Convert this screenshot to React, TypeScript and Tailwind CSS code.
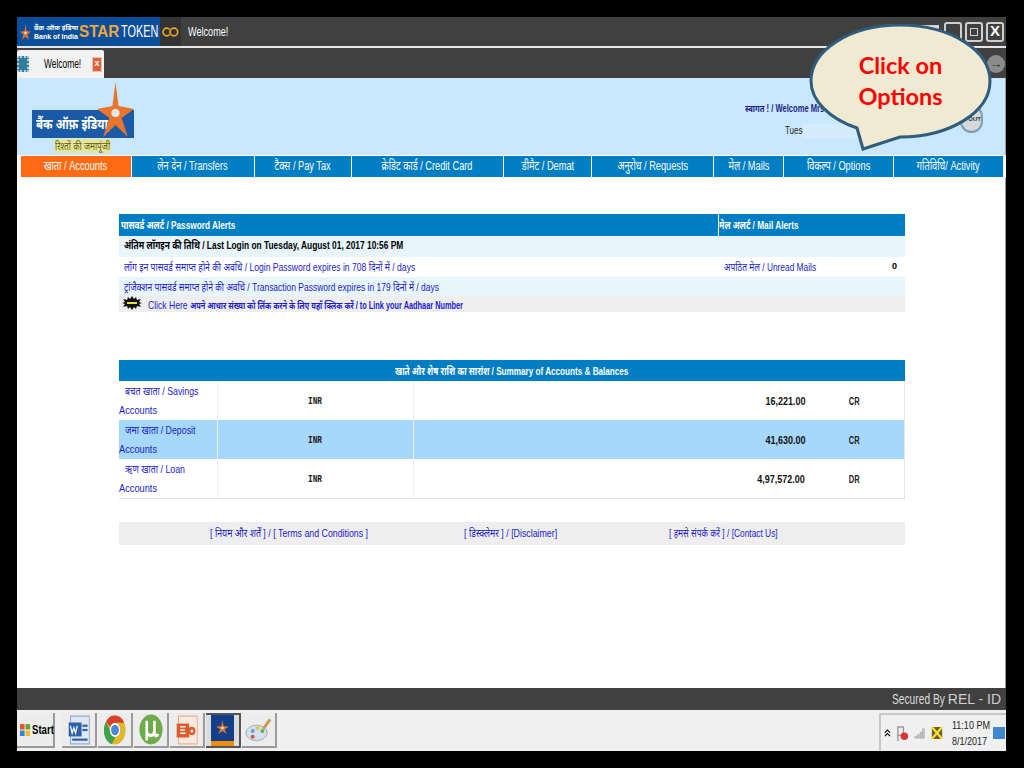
import React from "react";

const sans = { fontFamily: '"Liberation Sans", "Noto Sans Devanagari", "Noto Sans", sans-serif' };

const navItems = [
  { label: "खाता / Accounts", w: "w-[110px]", active: true },
  { label: "लेन देन / Transfers", w: "w-[122px]" },
  { label: "टैक्स / Pay Tax", w: "w-[96px]" },
  { label: "क्रेडिट कार्ड / Credit Card", w: "w-[151px]" },
  { label: "डीमैट / Demat", w: "w-[87px]" },
  { label: "अनुरोध / Requests", w: "w-[121px]" },
  { label: "मेल / Mails", w: "w-[69px]" },
  { label: "विकल्प / Options", w: "w-[109px]" },
  { label: "गतिविधि/ Activity", w: "w-[109px]" },
];

const accounts = [
  { hi: "बचत खाता / Savings", amount: "16,221.00", type: "CR", bg: "bg-white" },
  { hi: "जमा खाता / Deposit", amount: "41,630.00", type: "CR", bg: "bg-[#a5d8fb]" },
  { hi: "ऋण खाता / Loan", amount: "4,97,572.00", type: "DR", bg: "bg-white" },
];

const Star = ({ className }: { className: string }) => (
  <svg viewBox="0 0 36 55" preserveAspectRatio="none" className={className}>
    <polygon
      points="18,0 21,24 36,27 24,36 30,55 18,43 6,55 12,36 0,27 15,24"
      fill="#e8752a"
    />
    <circle cx="18" cy="31" r="4" fill="#dfe7ea" />
  </svg>
);

const TaskButton = ({ children, active }: { children: React.ReactNode; active?: boolean }) => (
  <div
    className={`w-[35px] h-[35px] shrink-0 flex items-center justify-center border-b-2 border-r-2 overflow-hidden ${
      active ? "border-[#555] border-t-2 border-t-[#555] bg-[#dcdcdc]" : "border-[#9a9a9a] bg-[#ececec]"
    }`}
  >
    {children}
  </div>
);

export default function App() {
  return (
    <div className="relative w-[1024px] h-[768px] bg-black pt-[17px] pb-[17px] pl-[17px] pr-[18px] overflow-hidden">
      <div className="w-full h-full flex flex-col bg-white" style={sans}>
        {/* title bar */}
        <div className="h-[29px] flex items-center bg-[#404040] shrink-0">
          <div className="w-[143px] h-full shrink-0 bg-[#0b4f9c] flex items-center pl-[3px] overflow-hidden">
            <Star className="w-[11px] h-[16px] shrink-0" />
            <div className="ml-[3px] text-white text-[7px] leading-[9px] font-bold w-[45px] shrink-0 whitespace-nowrap">
              <div>बैंक ऑफ़ इंडिया</div>
              <div>Bank of India</div>
            </div>
            <span className="text-[16px] font-bold text-[#f0a93a] inline-block whitespace-nowrap origin-left scale-x-[0.95] w-[42px] shrink-0">STAR</span>
            <span className="text-[16px] text-white inline-block whitespace-nowrap origin-left scale-x-[0.68]">TOKEN</span>
          </div>
          <div className="w-[21px] h-full shrink-0 bg-[#333] flex items-center justify-center">
            <svg viewBox="0 0 20 12" className="w-[17px] h-[12px]">
              <path d="M9 3A4.5 4.5 0 1 0 9 9" fill="none" stroke="#e8a62a" strokeWidth="2" />
              <circle cx="14" cy="6" r="4.5" fill="none" stroke="#e8a62a" strokeWidth="2" />
            </svg>
          </div>
          <span className="ml-[7px] text-white text-[12px] inline-block whitespace-nowrap origin-left scale-x-[0.76]">Welcome!</span>
          <div className="ml-auto flex gap-[3px] pr-[2px] items-center">
            <div className="w-[20px] h-[14px] bg-[#cfd8dc] mr-[2px]" />
            <div className="w-[18px] h-[20px] border-2 border-[#cfcfcf] rounded-[3px]" />
            <div className="w-[18px] h-[20px] border-2 border-[#cfcfcf] rounded-[3px] flex items-center justify-center">
              <div className="w-[8px] h-[8px] border border-[#cfcfcf]" />
            </div>
            <div className="w-[18px] h-[20px] border-2 border-[#cfcfcf] rounded-[3px] flex items-center justify-center text-white font-bold text-[15px]">
              X
            </div>
          </div>
        </div>
        <div className="h-[2px] bg-[#e6e6e6] shrink-0" />
        {/* tab bar */}
        <div className="h-[30px] flex bg-[#404040] shrink-0 items-end">
          <div className="w-[87px] h-[28px] bg-[#f2f2f2] rounded-t-[2px] flex items-center">
            <div className="w-[12px] h-[16px] shrink-0 bg-[#2f7f9f] border-2 border-dotted border-[#bcd]" />
            <span className="ml-[15px] w-[48px] shrink-0 text-[12px] text-black inline-block whitespace-nowrap origin-left scale-x-[0.7]">Welcome!</span>
            <div className="ml-auto mr-[2px] w-[11px] h-[15px] bg-[#e2603a] border border-[#e9c4b4] text-white text-[9px] font-bold flex items-center justify-center rounded-[1px]">
              x
            </div>
          </div>
          <div className="ml-auto mr-[1px] mb-[5px] w-[18px] h-[18px] rounded-full bg-[#8c8c8c] text-[#333] text-[13px] leading-[17px] text-center font-bold">
            →
          </div>
        </div>
        {/* page header */}
        <div className="h-[77px] bg-[#c9e8fd] shrink-0 flex relative border-r border-[#9a9a9a]">
          <div className="ml-[15px] w-[104px] flex flex-col relative">
            <div className="mt-[32px] h-[28px] bg-[#1b5aa6] w-[102px] flex items-center pl-[4px] text-white text-[15px] font-bold">
              <span className="inline-block whitespace-nowrap origin-left scale-x-[0.76]">बैंक ऑफ़ इंडिया</span>
            </div>
            <div className="mt-[1px] ml-[23px] w-[56px] h-[14px] text-[11px] leading-[14px] text-[#6a5a10] bg-[#e4e79a] overflow-hidden">
              <span className="inline-block whitespace-nowrap origin-left scale-x-[0.75]">रिश्तों की जमापूंजी</span>
            </div>
            <Star className="absolute left-[65px] top-[4px] w-[37px] h-[55px]" />
          </div>
          <div className="ml-auto w-[260px] pt-[23px] text-[10px] font-bold text-[#1c1c8c]">
            <div className="inline-block whitespace-nowrap origin-left scale-x-[0.76]">स्वागत ! / Welcome Mrs</div>
            <div className="mt-[7px] ml-[40px] flex items-center font-normal text-[#222]">
              <span className="inline-block w-[17px] origin-left scale-x-[0.8]">Tues</span>
              <div className="w-[60px] h-[14px] bg-[#d5ecfc]" />
            </div>
          </div>
          <div className="absolute right-[22px] top-[27px] w-[23px] h-[28px] rounded-full bg-[#d4d8da] border-2 border-[#7f9fb0] flex items-center justify-end text-[6px] font-bold text-[#333] overflow-hidden">
            OUT
          </div>
        </div>
        {/* nav */}
        <div className="h-[23px] bg-white flex gap-[1px] pl-[4px] items-center shrink-0">
          {navItems.map((n) => (
            <div
              key={n.label}
              className={`${n.w} h-[21px] pb-[1px] flex items-center justify-center text-white text-[13px] ${
                n.active ? "bg-[#ff6a13]" : "bg-[#007ec4]"
              }`}
            >
              <span className="inline-block shrink-0 whitespace-nowrap scale-x-[0.71]">{n.label}</span>
            </div>
          ))}
        </div>
        {/* content */}
        <div className="flex-1 flex flex-col pl-[102px] pr-[100px] pt-[36px] border-r border-[#9a9a9a]">
          <div className="text-[11px] font-bold">
            <div className="h-[22px] bg-[#007ec4] flex items-center text-white">
              <div className="w-[600px] shrink-0 pl-[2px] border-r border-white h-full flex items-center">
                <span className="inline-block whitespace-nowrap origin-left scale-x-[0.75]">पासवर्ड अलर्ट / Password Alerts</span>
              </div>
              <div className="flex-1 h-full flex items-center">
                <span className="inline-block whitespace-nowrap origin-left scale-x-[0.75]">मेल अलर्ट / Mail Alerts</span>
              </div>
            </div>
            <div className="h-[21px] bg-[#e8f5fd] flex items-center pl-[5px] text-black pb-[2px]">
              <span className="inline-block whitespace-nowrap origin-left scale-x-[0.76]">अंतिम लॉगइन की तिथि / Last Login on Tuesday, August 01, 2017 10:56 PM</span>
            </div>
            <div className="h-[20px] bg-white flex items-center text-[#1c1ccc] font-normal">
              <div className="w-[605px] shrink-0 pl-[5px]">
                <span className="inline-block whitespace-nowrap origin-left scale-x-[0.78]">लॉग इन पासवर्ड समाप्त होने की अवधि / Login Password expires in 708 दिनों में / days</span>
              </div>
              <span className="inline-block whitespace-nowrap origin-left scale-x-[0.76]">अपठित मेल / Unread Mails</span>
              <div className="ml-auto mr-[8px] text-black font-bold text-[9px]">0</div>
            </div>
            <div className="h-[19px] bg-[#e8f5fd] flex items-center pl-[5px] text-[#1c1ccc] font-normal pt-[2px]">
              <span className="inline-block whitespace-nowrap origin-left scale-x-[0.77]">ट्रांजैक्शन पासवर्ड समाप्त होने की अवधि / Transaction Password expires in 179 दिनों में / days</span>
            </div>
            <div className="h-[16px] bg-[#eeeeee] flex items-center pl-[3px] text-[#1c1ccc] text-[10px] pt-[3px] overflow-hidden">
              <svg viewBox="0 0 20 14" className="w-[20px] h-[14px] -mt-[6px] shrink-0">
                <polygon
                  points="0,7 3,6 1,3 5,4 6,1 8,3 10,0 12,3 14,1 15,4 19,3 17,6 20,7 17,8 19,11 15,10 14,13 12,11 10,14 8,11 6,13 5,10 1,11 3,8"
                  fill="#111"
                />
                <rect x="5" y="6" width="10" height="2" fill="#e8e04a" />
              </svg>
              <span className="ml-[6px] w-[39px] shrink-0 font-normal text-[11px] inline-block whitespace-nowrap origin-left scale-x-[0.78]">Click Here</span>
              <span className="ml-[3px] inline-block whitespace-nowrap origin-left scale-x-[0.735]">अपने आधार संख्या को लिंक करने के लिए यहाँ क्लिक करें / to Link your Aadhaar Number</span>
            </div>
          </div>

          <div className="mt-[48px] border-b border-[#e4e4e4]">
            <div className="h-[21px] bg-[#007ec4] flex items-center justify-center text-white text-[11px] font-bold pt-[2px]">
              <span className="inline-block shrink-0 whitespace-nowrap scale-x-[0.74]">खाते और शेष राशि का सारांश / Summary of Accounts &amp; Balances</span>
            </div>
            {accounts.map((a) => (
              <div key={a.hi} className={`h-[39px] flex ${a.bg} text-[10px]`}>
                <div className="w-[99px] shrink-0 text-[#1c1ccc] text-[11px] leading-[19px] border-r border-[#eef2f5] pt-[1px] overflow-hidden">
                  <div className="pl-[6px]">
                    <span className="inline-block whitespace-nowrap origin-left scale-x-[0.8]">{a.hi}</span>
                  </div>
                  <div className="inline-block whitespace-nowrap origin-left scale-x-[0.84]">Accounts</div>
                </div>
                <div className="w-[196px] shrink-0 flex items-center justify-center font-bold text-[#222] border-r border-[#eef2f5] pt-[2px]" style={{ fontFamily: '"Liberation Mono", monospace' }}>
                  <span className="inline-block scale-x-[0.78]">INR</span>
                </div>
                <div className="w-[391px] shrink-0 flex items-center justify-end font-bold text-[#111] pt-[2px]">
                  <span className="inline-block origin-right scale-x-[0.9]">{a.amount}</span>
                </div>
                <div className="flex-1 flex items-center justify-center font-bold text-[#222] pt-[2px] border-r border-[#e4e4e4]">
                  <span className="inline-block scale-x-[0.75]">{a.type}</span>
                </div>
              </div>
            ))}
          </div>

          <div className="mt-[23px] h-[23px] bg-[#eeeeee] flex items-center text-[#1c1ccc] text-[11px]">
            <div className="ml-[91px] w-[254px] shrink-0">
              <span className="inline-block whitespace-nowrap origin-left scale-x-[0.8]">[ नियम और शर्तें ] / [ Terms and Conditions ]</span>
            </div>
            <div className="w-[205px] shrink-0">
              <span className="inline-block whitespace-nowrap origin-left scale-x-[0.8]">[ डिस्क्लेमर ] / [Disclaimer]</span>
            </div>
            <span className="inline-block whitespace-nowrap origin-left scale-x-[0.76]">[ हमसे संपर्क करें ] / [Contact Us]</span>
          </div>
        </div>
        {/* secured bar */}
        <div className="h-[22px] bg-[#404040] flex items-center justify-end pr-[5px] text-[#dcdcdc] text-[14px] shrink-0">
          <span className="w-[56px] inline-block whitespace-nowrap origin-left scale-x-[0.73]">Secured By</span>
          <span className="font-normal text-[#cfcfcf]">REL - ID</span>
        </div>
        {/* taskbar */}
        <div className="h-[41px] bg-[#f0f0f0] flex items-center shrink-0">
          <div className="w-[38px] h-[35px] shrink-0 bg-[#ececec] border-b-2 border-r-2 border-[#9a9a9a] flex items-center text-[12px] font-bold text-black pl-[3px] gap-[1px]">
            <svg viewBox="0 0 12 12" className="w-[11px] h-[13px] shrink-0" preserveAspectRatio="none">
              <rect x="0" y="1" width="5" height="5" fill="#e2562c" />
              <rect x="6" y="1" width="5" height="5" fill="#6aa82c" />
              <rect x="0" y="7" width="5" height="5" fill="#2c84d8" />
              <rect x="6" y="7" width="5" height="5" fill="#f4bb2a" />
            </svg>
            <span className="inline-block whitespace-nowrap origin-left scale-x-[0.8]">Start</span>
          </div>
          <div className="ml-[7px] flex gap-[1px]">
            <TaskButton>
              <svg viewBox="0 0 28 28" preserveAspectRatio="none" className="w-[24px] h-[30px]">
                <rect x="4" y="1" width="22" height="26" fill="#dfe8f4" stroke="#8aa4cc" />
                <rect x="2" y="7" width="15" height="13" fill="#2e5fa8" />
                <path d="M4 10l2 7 2-5 2 5 2-7" fill="none" stroke="#fff" strokeWidth="1.4" />
                <rect x="18" y="9" width="6" height="2" fill="#2e5fa8" />
                <rect x="18" y="13" width="6" height="2" fill="#2e5fa8" />
                <rect x="6" y="22" width="18" height="2" fill="#2e5fa8" />
              </svg>
            </TaskButton>
            <TaskButton>
              <svg viewBox="0 0 28 28" preserveAspectRatio="none" className="w-[22px] h-[30px]">
                <circle cx="14" cy="14" r="13.5" fill="#e0b72e" />
                <path d="M14 .5a13.5 13.5 0 0 1 11.7 6.8H14a6.5 6.5 0 0 0-6 4L2.6 6A13.5 13.5 0 0 1 14 .5z" fill="#d8402f" />
                <path d="M2.6 6l5.5 9.5a6.5 6.5 0 0 0 6.4 5L10 27.4A13.5 13.5 0 0 1 2.6 6z" fill="#3fa24a" />
                <circle cx="14" cy="14" r="6.5" fill="#fff" />
                <circle cx="14" cy="14" r="5" fill="#4a86dc" />
              </svg>
            </TaskButton>
            <TaskButton>
              <svg viewBox="0 0 28 28" preserveAspectRatio="none" className="w-[24px] h-[31px]">
                <circle cx="14" cy="14" r="13.5" fill="#6fab4a" />
                <path d="M9 6v18M9 15a4.5 4.5 0 0 0 9 0V6M18 6v11a2 2 0 0 0 4 1" fill="none" stroke="#fff" strokeWidth="3" />
              </svg>
            </TaskButton>
            <TaskButton>
              <svg viewBox="0 0 28 28" preserveAspectRatio="none" className="w-[25px] h-[30px]">
                <rect x="5" y="1" width="21" height="26" fill="#fbe9df" stroke="#e9a887" />
                <rect x="3" y="8" width="14" height="13" fill="#df5a2c" />
                <path d="M7 11h6M7 14h5M7 17h6" stroke="#fff" strokeWidth="1.4" />
                <circle cx="20" cy="15" r="4" fill="#df5a2c" />
                <circle cx="20" cy="15" r="1.5" fill="#fff" />
              </svg>
            </TaskButton>
            <TaskButton active>
              <div className="w-[23px] h-[31px] bg-[#123f8a] flex flex-col items-center justify-end">
                <Star className="w-[13px] h-[14px] mb-[7px]" />
                <div className="w-full h-[5px] bg-[#f08c10]" />
              </div>
            </TaskButton>
            <TaskButton>
              <svg viewBox="0 0 28 28" className="w-[27px] h-[28px]">
                <ellipse cx="12" cy="17" rx="11" ry="8" fill="#d3e2ea" stroke="#97aebb" />
                <circle cx="8" cy="15" r="2" fill="#5aa2d8" />
                <circle cx="13" cy="12" r="2" fill="#e2c33a" />
                <circle cx="8" cy="21" r="2" fill="#d8543a" />
                <circle cx="18" cy="15" r="2" fill="#6ab04a" />
                <path d="M19 13L26 3" stroke="#c99a4a" strokeWidth="3" />
              </svg>
            </TaskButton>
          </div>
          <div className="ml-auto h-[38px] mt-[3px] w-[127px] shrink-0 border-t-2 border-l-2 border-[#c8c8c8] flex items-center text-[#222]">
            <svg viewBox="0 0 8 10" className="ml-[3px] w-[7px] h-[9px] shrink-0">
              <path d="M1 4l3-3 3 3M1 8l3-3 3 3" fill="none" stroke="#111" strokeWidth="1.4" />
            </svg>
            <svg viewBox="0 0 14 18" className="ml-[5px] w-[13px] h-[17px] shrink-0">
              <path d="M2 1v16M2 2h6v9H2" fill="none" stroke="#9a9a9a" strokeWidth="1.5" />
              <circle cx="9" cy="12" r="4" fill="#d8343a" />
            </svg>
            <svg viewBox="0 0 14 14" className="ml-[5px] w-[12px] h-[12px] shrink-0">
              <path d="M1 13v-2h2v2zM4 13V9h2v4zM7 13V6h2v7zM10 13V2h2v11z" fill="#c8c8c8" stroke="#888" strokeWidth="0.5" />
            </svg>
            <svg viewBox="0 0 14 16" className="ml-[5px] w-[12px] h-[16px] shrink-0">
              <rect x="1" y="1" width="12" height="14" fill="#7a5a1a" />
              <path d="M1 1l12 14M13 1L1 15" stroke="#f2e33a" strokeWidth="2.5" />
            </svg>
            <div className="ml-[9px] w-[40px] shrink-0 text-[11px] leading-[16px]">
              <div className="whitespace-nowrap origin-left scale-x-[0.82]">11:10 PM</div>
              <div className="whitespace-nowrap origin-left scale-x-[0.82]">8/1/2017</div>
            </div>
            <div className="ml-[1px] w-[12px] h-[12px] bg-[#3f87cf] shrink-0" />
          </div>
        </div>
      </div>

      {/* callout */}
      <div className="absolute left-[808px] top-[24px] w-[185px] h-[130px]">
        <svg viewBox="0 0 185 130" className="absolute inset-0 w-full h-full">
          <path
            d="M92 1C142 1 182 26 182 57C182 88 142 113 92 113L55 125L49 104C22 95 3 77 3 57C3 26 42 1 92 1Z"
            fill="#f0ead2"
            stroke="#2f5d7c"
            strokeWidth="3"
          />
        </svg>
        <div className="absolute inset-x-0 top-[26px] text-center text-[#ff0000] font-bold text-[23.5px] leading-[31px]" style={{ fontFamily: '"Lato", sans-serif' }}>
          <div>Click on</div>
          <div>Options</div>
        </div>
      </div>
    </div>
  );
}
